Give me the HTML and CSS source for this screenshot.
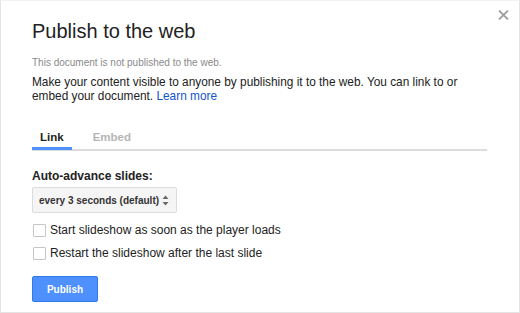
FILE: index.html
```html
<!DOCTYPE html>
<html lang="en">
<head>
    <meta charset="UTF-8">
    <title>Publish to the web</title>
    <link rel="stylesheet" href="styles.css">
</head>
<body>
    <div class="dialog">
        <!-- close -->
        <span class="dialog-close">
            <svg width="11" height="10" viewBox="0 0 11 10">
                <path d="M1 0.5 L10 9.5 M10 0.5 L1 9.5" stroke="#a0a0a0" stroke-width="1.8" fill="none"/>
            </svg>
        </span>

        <div class="dialog-title">Publish to the web</div>
        <div class="status">This document is not published to the web.</div>
        <div class="intro">
            <div>Make your content visible to anyone by publishing it to the web. You can link to or</div>
            <div><span>embed your document.</span> <a href="#" class="learn-more">Learn more</a></div>
        </div>

        <div class="tabs">
            <div class="tab active">Link</div>
            <div class="tab">Embed</div>
        </div>

        <div class="field-label">Auto-advance slides:</div>
        <div class="select">
            <span>every 3 seconds (default)</span>
            <svg width="7" height="11" viewBox="0 0 7 11">
                <path d="M3.5 0.5 L6.5 4 L0.5 4 Z M0.5 7 L6.5 7 L3.5 10.5 Z" fill="#666"/>
            </svg>
        </div>

        <label class="check-row">
            <span class="checkbox"></span>
            <span>Start slideshow as soon as the player loads</span>
        </label>
        <label class="check-row">
            <span class="checkbox"></span>
            <span>Restart the slideshow after the last slide</span>
        </label>

        <button class="btn-publish">Publish</button>
    </div>
</body>
</html>
```

FILE: styles.css
```css
body {
    margin: 0;
    background: #fff;
    font-family: "Liberation Sans", Arial, sans-serif;
    color: #222;
}

/* Окно диалога */
.dialog {
    position: relative;
    width: 520px;
    height: 313px;
    box-sizing: border-box;
    border: 1px solid #e4e4e4;
    border-top-color: #f2f2f2;
    padding: 18px 32px 0 31px;
}

.dialog-close {
    position: absolute;
    top: 9px;
    right: 10px;
    line-height: 0;
    cursor: pointer;
}

.dialog-title {
    font-size: 20px;
    line-height: 24px;
}

.status {
    margin-top: 13px;
    font-size: 10px;
    line-height: 13px;
    color: #8a8a8a;
}

.intro {
    margin-top: 6px;
    font-size: 11.85px;
    line-height: 14px;
}

.learn-more {
    color: #15c;
    text-decoration: none;
}

/* Вкладки */
.tabs {
    display: flex;
    margin-top: 27px;
    border-bottom: 2px solid #dcdcdc;
}

.tab {
    padding: 0 8px 2px;
    margin-bottom: -1px;
    margin-right: 13px;
    font-size: 11.5px;
    font-weight: bold;
    line-height: 15px;
    color: #b5b5b5;
    border-bottom: 3px solid transparent;
}

.tab.active {
    color: #222;
    border-bottom-color: #4d90fe;
}

.field-label {
    margin-top: 18px;
    font-size: 12px;
    font-weight: bold;
    line-height: 14px;
}

.select {
    display: flex;
    align-items: center;
    justify-content: space-between;
    width: 145px;
    height: 26px;
    box-sizing: border-box;
    margin-top: 4px;
    padding: 0 7px 0 6px;
    background: #f5f5f5;
    border: 1px solid #dcdcdc;
    border-radius: 2px;
    font-size: 10px;
    font-weight: bold;
    color: #333;
}

.check-row {
    display: flex;
    align-items: center;
    gap: 4px;
    margin-top: 8px;
    font-size: 12px;
    line-height: 14px;
}

.select + .check-row {
    margin-top: 9px;
}

.checkbox {
    width: 11px;
    height: 11px;
    margin-left: 1px;
    margin-top: 2px;
    border: 1px solid #c6c6c6;
    border-radius: 1px;
    background: #fff;
}

.btn-publish {
    display: block;
    margin-top: 16px;
    width: 66px;
    height: 26px;
    padding: 0;
    background: #4d90fe;
    border: 1px solid #3079ed;
    border-radius: 2px;
    color: #fff;
    font-family: "Liberation Sans", Arial, sans-serif;
    font-size: 10px;
    font-weight: bold;
}
```
